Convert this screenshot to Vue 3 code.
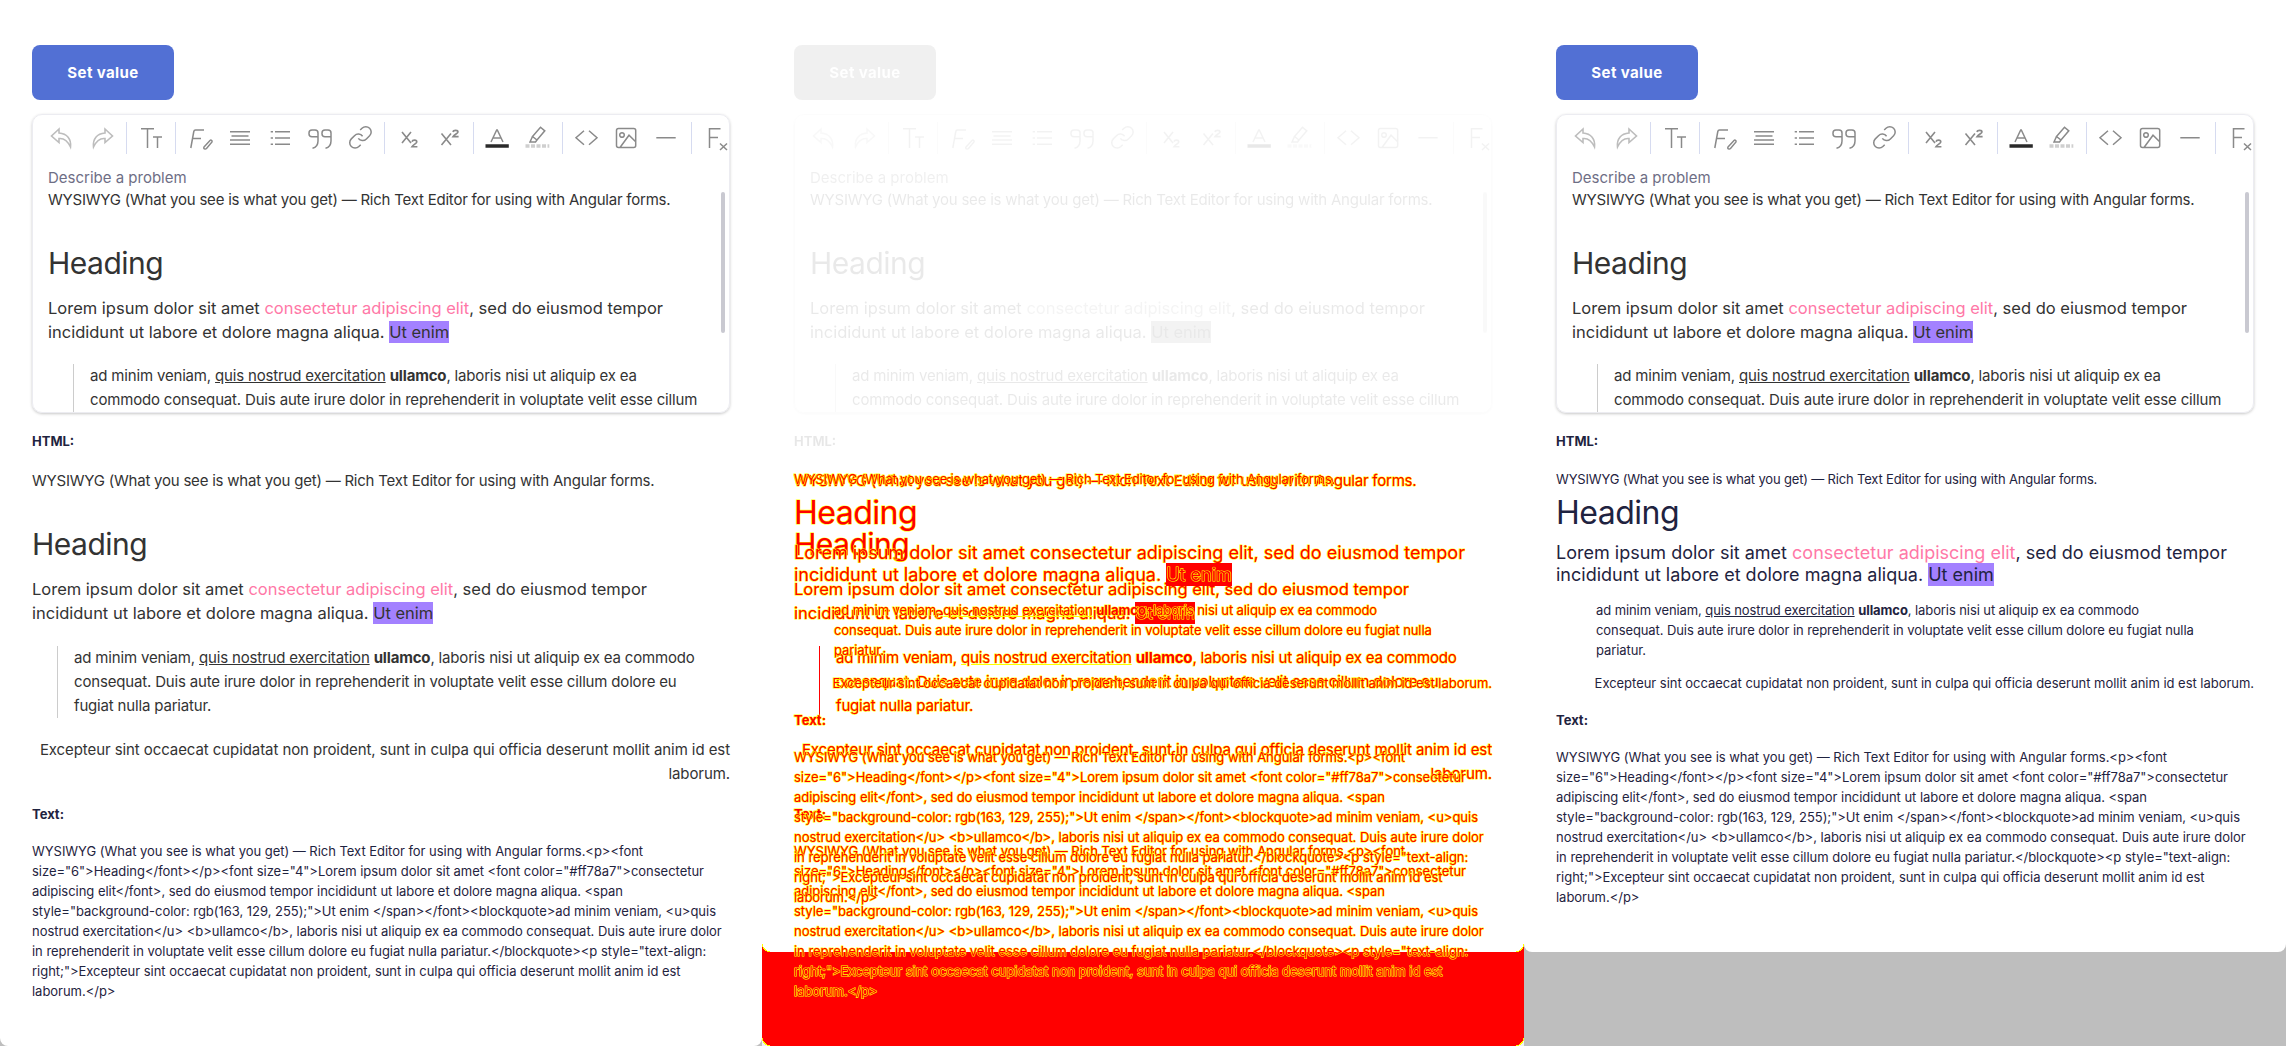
<script setup>
const panels = [
  { name: 'left', layers: ['wide'] },
  { name: 'diff', layers: ['wide', 'compact'] },
  { name: 'right', layers: ['compact'] }
]

const toolbar = [
  [
    { label: 'Undo', parts: [{ d: 'M13 7 5.5 14 13 20.5V16.5C17.5 16 21 17.5 24.5 25 25.5 17 21 11.5 13 11Z', cls: 'soft' }] },
    { label: 'Redo', parts: [{ d: 'M19 7 26.5 14 19 20.5V16.5C14.5 16 11 17.5 7.5 25 6.5 17 11 11.5 19 11Z', cls: 'soft' }] }
  ],
  [
    { label: 'Font size', parts: [{ d: 'M6 6.7H19M12.5 6.7V26M18 15H27M22.5 15V26' }] }
  ],
  [
    {
      label: 'Font',
      parts: [{ d: 'M20 8H11.5C10.5 8 10 8.5 9.8 9.5L6.8 26M8.5 16.5H17M20 25L26 18.5C27 17.5 28.5 18.5 28 20L22.5 26.5C21.5 27.5 19 27 20 25Z' }]
    },
    { label: 'Align', parts: [{ d: 'M6 9.7H26M7.5 13.9H24.5M6 18.1H26M6 22.3H26' }] },
    { label: 'List', parts: [{ d: 'M6.7 9.7H9M11 9.7H26M6.7 16H9M11 16H26M6.7 22.3H9M11 22.3H26' }] },
    {
      label: 'Quote',
      parts: [{ d: 'M14 14.8H8A3 3 0 0 1 5 11.8V11A3 3 0 0 1 8 8H11A3 3 0 0 1 14 11V19C14 23 12 25.5 8.5 26.3M27 14.8H21A3 3 0 0 1 18 11.8V11A3 3 0 0 1 21 8H24A3 3 0 0 1 27 11V19C27 23 25 25.5 21.5 26.3' }]
    },
    {
      label: 'Link',
      parts: [{ d: 'M14.3 16.4A5.3 5.3 0 0 0 22.4 17L25.6 13.8A5.3 5.3 0 0 0 18 6.2L16.2 8M18.6 14.3A5.3 5.3 0 0 0 10.5 13.7L7.3 16.9A5.3 5.3 0 0 0 14.9 24.5L16.7 22.7' }]
    }
  ],
  [
    { label: 'Subscript', parts: [{ d: 'M9 10 18 21M18 10 9 21M19 19.8C19.5 17.6 23.8 17.6 23.8 19.9 23.8 21.3 20.5 22.5 19 24.7H24.4', cls: 'firm' }] },
    { label: 'Superscript', parts: [{ d: 'M8.5 11.5 18 23M18 11.5 8.5 23M20 10C20.4 7.8 25 7.8 25 10 25 11.3 21.5 12.4 20 14.6H25.6', cls: 'firm' }] }
  ],
  [
    { label: 'Text colour', parts: [{ d: 'M9 20 14.7 8H15.3L21 20M11 16H19' }, { d: 'M3.5 24H26.8', cls: 'bar' }] },
    {
      label: 'Highlight',
      parts: [{ d: 'M10.5 14.5 18.5 5.2 22.8 8.8 15 18ZM10.5 14.5 8 20H13.5L15 18' }, { d: 'M3.5 24H27.3', cls: 'bar-light' }]
    }
  ],
  [
    { label: 'Code', parts: [{ d: 'M13 8.7 5 15.7 13 22.7M18 8.7 26 15.7 18 22.7' }] },
    {
      label: 'Image',
      parts: [{ d: 'M7.5 6.5H22.7A2 2 0 0 1 24.7 8.5V23.5A2 2 0 0 1 22.7 25.5H7.5A2 2 0 0 1 5.5 23.5V8.5A2 2 0 0 1 7.5 6.5ZM8.7 13A2.3 2.3 0 1 0 13.3 13 2.3 2.3 0 1 0 8.7 13M9 25.5 18 13.2 24.7 19.8' }]
    },
    { label: 'Rule', parts: [{ d: 'M5.3 15.7H24.7' }] }
  ],
  [
    { label: 'Clear format', parts: [{ d: 'M9.5 26V6.7H20.5M9.5 15.5H18M20 21.5 27 28M27 21.5 20 28' }] }
  ]
]

const plainLines = [
  'WYSIWYG (What you see is what you get) — Rich Text Editor for using with Angular forms.<p><font',
  'size="6">Heading</font></p><font size="4">Lorem ipsum dolor sit amet <font color="#ff78a7">consectetur',
  'adipiscing elit</font>, sed do eiusmod tempor incididunt ut labore et dolore magna aliqua. <span',
  'style="background-color: rgb(163, 129, 255);">Ut enim </span></font><blockquote>ad minim veniam, <u>quis',
  'nostrud exercitation</u> <b>ullamco</b>, laboris nisi ut aliquip ex ea commodo consequat. Duis aute irure dolor',
  'in reprehenderit in voluptate velit esse cillum dolore eu fugiat nulla pariatur.</blockquote><p style="text-align:',
  'right;">Excepteur sint occaecat cupidatat non proident, sunt in culpa qui officia deserunt mollit anim id est',
  'laborum.</p>'
]
</script>

<template>
  <div class="page">
    <section v-for="panel in panels" :key="panel.name" :class="['panel', `panel--${panel.name}`]">
      <div v-if="panel.name === 'diff'" class="diff-fill">
        <i class="corner corner--top-left"></i>
        <i class="corner corner--top-right"></i>
        <i class="corner corner--bottom-left"></i>
        <i class="corner corner--bottom-right"></i>
      </div>

      <div class="panel__top">
        <button class="set-btn" type="button">Set value</button>

        <div class="editor">
          <div class="toolbar">
            <div v-for="(group, g) in toolbar" :key="g" class="toolbar__group">
              <span v-for="icon in group" :key="icon.label" class="toolbar__btn" :title="icon.label">
                <svg width="32" height="32" viewBox="0 0 32 32" fill="none">
                  <path v-for="(part, p) in icon.parts" :key="p" :d="part.d" :class="part.cls" />
                </svg>
              </span>
            </div>
          </div>

          <div class="editor__body">
            <div class="editor__placeholder">Describe a problem</div>
            <div class="rich rich--editor">
              <div>WYSIWYG (What you see is what you get) — Rich Text Editor for using with Angular forms.</div>
              <p class="rich__heading">Heading</p>
              <div class="rich__lead">
                Lorem ipsum dolor sit amet <span class="pink">consectetur adipiscing elit</span>, sed do eiusmod tempor<br />
                incididunt ut labore et dolore magna aliqua. <span class="mark">Ut enim</span>
              </div>
              <blockquote class="rich__quote">
                ad minim veniam, <u>quis nostrud exercitation</u> <b>ullamco</b>, laboris nisi ut aliquip ex ea<br />
                commodo consequat. Duis aute irure dolor in reprehenderit in voluptate velit esse cillum
              </blockquote>
            </div>
          </div>
          <div class="editor__scroll"></div>
        </div>

        <h4 class="label label--html">HTML:</h4>
      </div>

      <div class="outputs">
        <div v-for="layer in panel.layers" :key="layer" :class="['output', `output--${layer}`]">
          <div class="rich">
            <div>WYSIWYG (What you see is what you get) — Rich Text Editor for using with Angular forms.</div>
            <p class="rich__heading">Heading</p>
            <div class="rich__lead">
              Lorem ipsum dolor sit amet <span class="pink">consectetur adipiscing elit</span>, sed do eiusmod tempor<br />
              incididunt ut labore et dolore magna aliqua. <span class="mark">Ut enim</span>
            </div>
            <blockquote class="rich__quote">
              ad minim veniam, <u>quis nostrud exercitation</u> <b>ullamco</b>, laboris nisi ut aliquip ex ea commodo<br v-if="layer === 'compact'" />
              consequat. Duis aute irure dolor in reprehenderit in voluptate velit esse cillum dolore eu fugiat nulla
              pariatur.
            </blockquote>
            <p class="rich__right">
              Excepteur sint occaecat cupidatat non proident, sunt in culpa qui officia deserunt mollit anim id est
              laborum.
            </p>
          </div>
          <h4 class="label label--text">Text:</h4>
          <div class="plain">
            <div v-for="(line, i) in plainLines" :key="i" class="plain__line">{{ line }}</div>
          </div>
        </div>
      </div>
    </section>
  </div>
</template>

<style>
body {
  margin: 0;
  background: #bebebe;
}
</style>

<style scoped>
.page {
  display: grid;
  grid-template-columns: repeat(3, 762px);
  width: 2286px;
  height: 1046px;
  overflow: hidden;
  font-family: Inter, "Liberation Sans", sans-serif;
  color: #333;
}

.panel {
  position: relative;
  box-sizing: border-box;
  padding: 45px 32px 44px;
  background: #fff;
  border-radius: 0 0 8px 8px;
  min-width: 0;
}

.panel--right {
  align-self: start;
  padding-bottom: 45px;
}

.panel--diff {
  border-radius: 0;
}

.panel--diff .panel__top {
  filter: grayscale(1);
  opacity: 0.1;
}

.diff-fill {
  position: absolute;
  top: 952px;
  left: 0;
  right: 0;
  bottom: 0;
  background: #f00;
}

.corner {
  position: absolute;
  width: 8px;
  height: 8px;
}

.corner--top-left {
  top: -8px;
  left: 0;
  background: radial-gradient(circle at 100% 0, transparent 7px, #ff0 7px, #ff0 8px, #f00 8px);
}

.corner--top-right {
  top: -8px;
  right: 0;
  background: radial-gradient(circle at 0 0, transparent 7px, #ff0 7px, #ff0 8px, #f00 8px);
}

.corner--bottom-left {
  bottom: 0;
  left: 0;
  background: radial-gradient(circle at 100% 0, #f00 7px, #ff0 7px, #ff0 8px, #f2f2f2 8px);
}

.corner--bottom-right {
  bottom: 0;
  right: 0;
  background: radial-gradient(circle at 0 0, #f00 7px, #ff0 7px, #ff0 8px, #f2f2f2 8px);
}

.set-btn {
  display: block;
  width: 142px;
  height: 55px;
  padding: 0;
  border: 0;
  border-radius: 8px;
  background: #5270d4;
  color: #fff;
  font: 700 15px Inter, "Liberation Sans", sans-serif;
  letter-spacing: 0.4px;
}

/* Editor */
.editor {
  position: relative;
  box-sizing: border-box;
  height: 299px;
  margin-top: 14px;
  border: 1px solid #ececf1;
  border-radius: 10px;
  box-shadow: 0 1px 3px rgba(0, 0, 0, 0.22);
  overflow: hidden;
}

.toolbar {
  display: flex;
  flex-wrap: nowrap;
  padding: 7px 5px 8px;
}

.toolbar__group {
  display: flex;
  flex: none;
  padding: 0 4px;
  border-right: 1px solid #d6dbf0;
}

.toolbar__group:last-child {
  border-right: 0;
}

.toolbar__btn {
  display: flex;
  justify-content: center;
  width: 40px;
  height: 32px;
}

.toolbar__btn svg {
  overflow: visible;
}

.toolbar__btn path {
  stroke: #8a8a8a;
  stroke-width: 1.5;
}

.toolbar__btn path.soft {
  stroke: #bdbdbd;
  stroke-width: 1.6;
}

.toolbar__btn path.firm {
  stroke-width: 1.6;
}

.toolbar__btn path.bar {
  stroke: #2a2a2a;
  stroke-width: 3.5;
}

.toolbar__btn path.bar-light {
  stroke: #cfcfcf;
  stroke-width: 3.5;
  stroke-dasharray: 4 1.5;
}

.editor__body {
  padding: 6px 16px 0 15px;
}

.editor__placeholder {
  font-size: 15px;
  line-height: 20px;
  color: #6e6e85;
}

.editor__scroll {
  position: absolute;
  top: 77px;
  right: 4px;
  width: 4px;
  height: 141px;
  border-radius: 2px;
  background: #c9c9d1;
}

/* Rich text, wide and compact variants */
.rich {
  font-size: 15px;
  line-height: 24px;
  letter-spacing: -0.22px;
}

.rich p,
.rich blockquote {
  margin: 0;
}

.rich .rich__heading {
  margin: 30px 0 12px;
  font-size: 30px;
  line-height: 42px;
  letter-spacing: -0.5px;
}

.rich__lead {
  font-size: 16.5px;
  letter-spacing: 0;
}

.rich .rich__quote {
  margin: 21px 0 0 25px;
  padding: 0 14px 0 16px;
  border-left: 1px solid #ccc;
  letter-spacing: -0.17px;
}

.rich--editor .rich__quote {
  margin-top: 20px;
  white-space: nowrap;
}

.rich .rich__right {
  margin-top: 20px;
  text-align: right;
  letter-spacing: -0.08px;
}

.pink {
  color: #ff78a7;
}

.mark {
  background: #a381ff;
  padding: 1px 0;
}

.label {
  margin: 0;
  font-size: 13px;
  line-height: 20px;
  font-weight: 700;
  color: #1f2340;
}

.label--html {
  margin-top: 18px;
}

.outputs {
  position: relative;
  margin-top: 18px;
}

.output--wide .label--text {
  margin-top: 18px;
}

.output--compact .label--text {
  margin-top: 17px;
}

.plain {
  margin-top: 17px;
  font-size: 13px;
  line-height: 20px;
  letter-spacing: -0.03px;
  color: #1f2340;
}

.plain__line {
  white-space: nowrap;
}

.output--compact .rich {
  font-size: 13px;
  line-height: 20px;
  letter-spacing: -0.17px;
  color: #1f2340;
}

.output--compact .rich .rich__heading {
  margin: 2px 0 7px;
  font-size: 32px;
  line-height: 44px;
}

.output--compact .rich__lead {
  font-size: 18px;
  line-height: 22px;
  letter-spacing: 0;
}

.output--compact .rich .rich__quote {
  margin: 14px 40px 0 40px;
  padding: 0;
  border: 0;
  letter-spacing: -0.09px;
}

.output--compact .rich .rich__right {
  margin-top: 13px;
  letter-spacing: -0.03px;
}

/* Diff column: both outputs stacked in red with a yellow edge */
.panel--diff .output {
  position: absolute;
  top: 0;
  left: 0;
  right: 0;
}

.panel--diff .output,
.panel--diff .output .rich,
.panel--diff .output .plain,
.panel--diff .output .label,
.panel--diff .output .pink {
  color: #f00;
}

.panel--diff .output {
  -webkit-text-stroke: 1.2px #ff0;
  paint-order: stroke fill;
}

.panel--diff .output .mark {
  background: #f00;
}

.panel--diff .output .rich__quote {
  border-left-color: #f00;
}
</style>
